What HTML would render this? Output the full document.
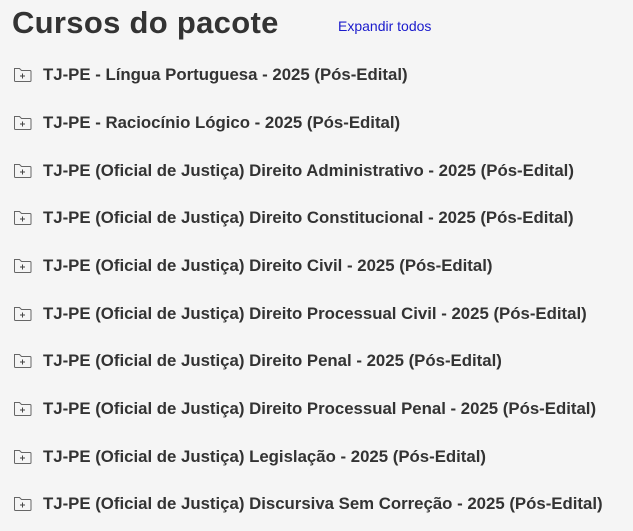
<!DOCTYPE html>
<html><head><meta charset="utf-8"><style>
body{margin:0;background:#f5f5f5;width:633px;height:531px;overflow:hidden;font-family:"Liberation Sans",sans-serif;color:#333}
h1{position:absolute;left:12px;top:5px;margin:0;font-size:31px;font-weight:bold;letter-spacing:0.3px;color:#333}
.exp{position:absolute;left:338px;top:18px;font-size:14px;color:#1a1acc}
.it{position:absolute;left:13px;height:20px;display:flex;align-items:center;font-size:16.8px;font-weight:bold;white-space:nowrap}
.it svg{margin-right:11px;position:relative;top:-1px}
</style></head><body>
<h1>Cursos do pacote</h1>
<div class="exp">Expandir todos</div>
<div class="it" style="top:65px"><svg width="19" height="17" viewBox="0 0 19 17"><path d="M1.5 2.5h5l2 2h8.5a1 1 0 0 1 1 1v9a1 1 0 0 1-1 1h-14.5a1 1 0 0 1-1-1z" fill="none" stroke="#666" stroke-width="1"/><path d="M9.5 7.5v5M7 10h5" stroke="#444" stroke-width="1"/></svg>TJ-PE - Língua Portuguesa - 2025 (Pós-Edital)</div>
<div class="it" style="top:113px"><svg width="19" height="17" viewBox="0 0 19 17"><path d="M1.5 2.5h5l2 2h8.5a1 1 0 0 1 1 1v9a1 1 0 0 1-1 1h-14.5a1 1 0 0 1-1-1z" fill="none" stroke="#666" stroke-width="1"/><path d="M9.5 7.5v5M7 10h5" stroke="#444" stroke-width="1"/></svg>TJ-PE - Raciocínio Lógico - 2025 (Pós-Edital)</div>
<div class="it" style="top:161px"><svg width="19" height="17" viewBox="0 0 19 17"><path d="M1.5 2.5h5l2 2h8.5a1 1 0 0 1 1 1v9a1 1 0 0 1-1 1h-14.5a1 1 0 0 1-1-1z" fill="none" stroke="#666" stroke-width="1"/><path d="M9.5 7.5v5M7 10h5" stroke="#444" stroke-width="1"/></svg>TJ-PE (Oficial de Justiça) Direito Administrativo - 2025 (Pós-Edital)</div>
<div class="it" style="top:208px"><svg width="19" height="17" viewBox="0 0 19 17"><path d="M1.5 2.5h5l2 2h8.5a1 1 0 0 1 1 1v9a1 1 0 0 1-1 1h-14.5a1 1 0 0 1-1-1z" fill="none" stroke="#666" stroke-width="1"/><path d="M9.5 7.5v5M7 10h5" stroke="#444" stroke-width="1"/></svg>TJ-PE (Oficial de Justiça) Direito Constitucional - 2025 (Pós-Edital)</div>
<div class="it" style="top:256px"><svg width="19" height="17" viewBox="0 0 19 17"><path d="M1.5 2.5h5l2 2h8.5a1 1 0 0 1 1 1v9a1 1 0 0 1-1 1h-14.5a1 1 0 0 1-1-1z" fill="none" stroke="#666" stroke-width="1"/><path d="M9.5 7.5v5M7 10h5" stroke="#444" stroke-width="1"/></svg>TJ-PE (Oficial de Justiça) Direito Civil - 2025 (Pós-Edital)</div>
<div class="it" style="top:304px"><svg width="19" height="17" viewBox="0 0 19 17"><path d="M1.5 2.5h5l2 2h8.5a1 1 0 0 1 1 1v9a1 1 0 0 1-1 1h-14.5a1 1 0 0 1-1-1z" fill="none" stroke="#666" stroke-width="1"/><path d="M9.5 7.5v5M7 10h5" stroke="#444" stroke-width="1"/></svg>TJ-PE (Oficial de Justiça) Direito Processual Civil - 2025 (Pós-Edital)</div>
<div class="it" style="top:351px"><svg width="19" height="17" viewBox="0 0 19 17"><path d="M1.5 2.5h5l2 2h8.5a1 1 0 0 1 1 1v9a1 1 0 0 1-1 1h-14.5a1 1 0 0 1-1-1z" fill="none" stroke="#666" stroke-width="1"/><path d="M9.5 7.5v5M7 10h5" stroke="#444" stroke-width="1"/></svg>TJ-PE (Oficial de Justiça) Direito Penal - 2025 (Pós-Edital)</div>
<div class="it" style="top:399px"><svg width="19" height="17" viewBox="0 0 19 17"><path d="M1.5 2.5h5l2 2h8.5a1 1 0 0 1 1 1v9a1 1 0 0 1-1 1h-14.5a1 1 0 0 1-1-1z" fill="none" stroke="#666" stroke-width="1"/><path d="M9.5 7.5v5M7 10h5" stroke="#444" stroke-width="1"/></svg>TJ-PE (Oficial de Justiça) Direito Processual Penal - 2025 (Pós-Edital)</div>
<div class="it" style="top:447px"><svg width="19" height="17" viewBox="0 0 19 17"><path d="M1.5 2.5h5l2 2h8.5a1 1 0 0 1 1 1v9a1 1 0 0 1-1 1h-14.5a1 1 0 0 1-1-1z" fill="none" stroke="#666" stroke-width="1"/><path d="M9.5 7.5v5M7 10h5" stroke="#444" stroke-width="1"/></svg>TJ-PE (Oficial de Justiça) Legislação - 2025 (Pós-Edital)</div>
<div class="it" style="top:494px"><svg width="19" height="17" viewBox="0 0 19 17"><path d="M1.5 2.5h5l2 2h8.5a1 1 0 0 1 1 1v9a1 1 0 0 1-1 1h-14.5a1 1 0 0 1-1-1z" fill="none" stroke="#666" stroke-width="1"/><path d="M9.5 7.5v5M7 10h5" stroke="#444" stroke-width="1"/></svg>TJ-PE (Oficial de Justiça) Discursiva Sem Correção - 2025 (Pós-Edital)</div>
</body></html>
